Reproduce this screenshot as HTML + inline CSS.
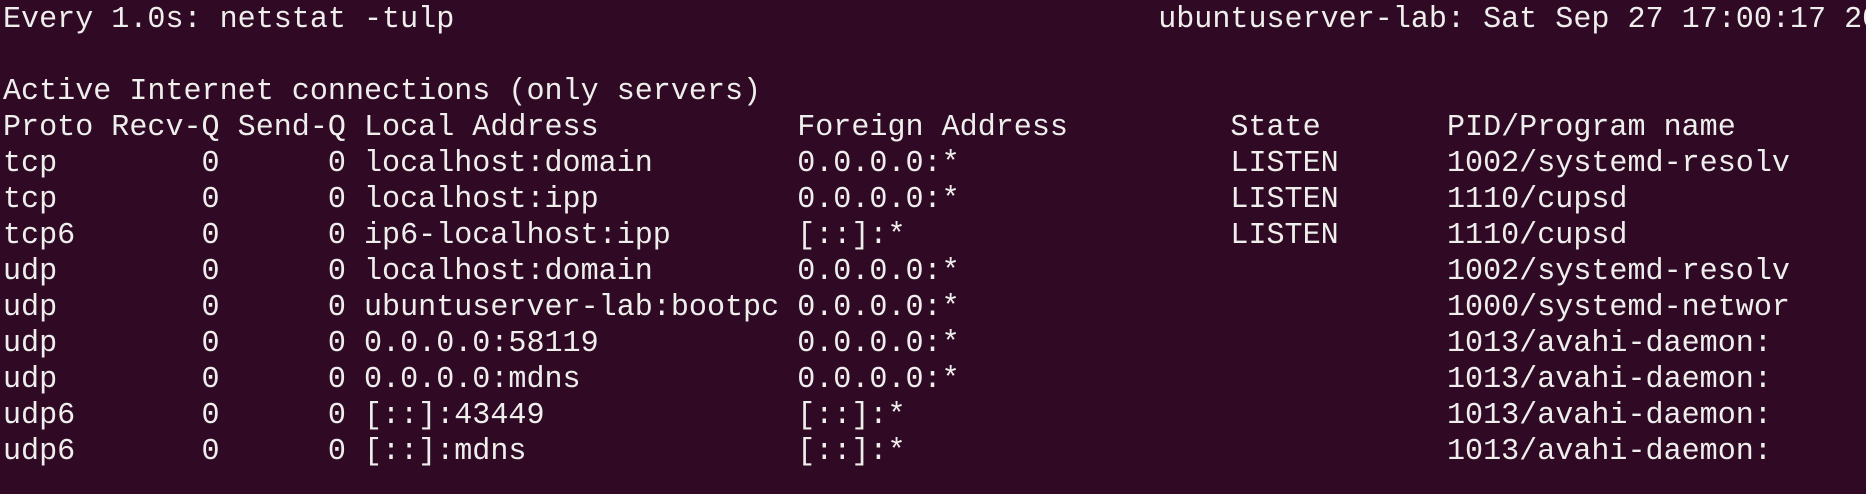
<!DOCTYPE html>
<html><head><meta charset="utf-8"><style>
html,body{margin:0;padding:0;background:#300a24;width:1866px;height:494px;overflow:hidden}
pre{margin:0;position:absolute;left:3px;top:2px;font-family:"Liberation Mono",monospace;font-size:30.08px;line-height:36px;color:#eeeeec;white-space:pre;letter-spacing:0}
</style></head><body><pre>Every 1.0s: netstat -tulp                                       ubuntuserver-lab: Sat Sep 27 17:00:17 2025

Active Internet connections (only servers)
Proto Recv-Q Send-Q Local Address           Foreign Address         State       PID/Program name
tcp        0      0 localhost:domain        0.0.0.0:*               LISTEN      1002/systemd-resolv
tcp        0      0 localhost:ipp           0.0.0.0:*               LISTEN      1110/cupsd
tcp6       0      0 ip6-localhost:ipp       [::]:*                  LISTEN      1110/cupsd
udp        0      0 localhost:domain        0.0.0.0:*                           1002/systemd-resolv
udp        0      0 ubuntuserver-lab:bootpc 0.0.0.0:*                           1000/systemd-networ
udp        0      0 0.0.0.0:58119           0.0.0.0:*                           1013/avahi-daemon:
udp        0      0 0.0.0.0:mdns            0.0.0.0:*                           1013/avahi-daemon:
udp6       0      0 [::]:43449              [::]:*                              1013/avahi-daemon:
udp6       0      0 [::]:mdns               [::]:*                              1013/avahi-daemon:
</pre></body></html>
